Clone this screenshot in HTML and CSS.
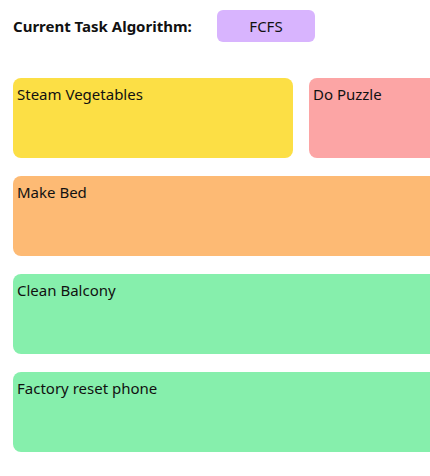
FILE: index.html
```html
<!DOCTYPE html>
<html>
<head>
<meta charset="utf-8">
<link rel="stylesheet" href="styles.css">
</head>
<body>
<div class="page">
  <div class="header">
    <span class="label">Current Task Algorithm:</span>
    <span class="pill">FCFS</span>
  </div>
  <div class="board">
    <div class="row">
      <div class="card yellow half">Steam Vegetables</div>
      <div class="card pink half">Do Puzzle</div>
    </div>
    <div class="card orange full">Make Bed</div>
    <div class="card green full">Clean Balcony</div>
    <div class="card green full">Factory reset phone</div>
  </div>
</div>
</body>
</html>
```
FILE: styles.css
```css
html, body {
  margin: 0;
  padding: 0;
  overflow: hidden;
  background: #fff;
}
body {
  font-family: "Noto Sans", "Open Sans", sans-serif;
  color: #111;
}
.page {
  padding: 10px 0 0 13px;
}
.header {
  display: flex;
  align-items: center;
  height: 32px;
}
.label {
  font-weight: 700;
  font-size: 15px;
  width: 204px;
}
.pill {
  width: 98px;
  height: 32px;
  box-sizing: border-box;
  background: #d8b4fe;
  border-radius: 6px;
  display: flex;
  align-items: center;
  justify-content: center;
  font-size: 15px;
}
.board {
  margin-top: 36px;
  display: flex;
  flex-direction: column;
  gap: 18px;
}
.row {
  display: flex;
  gap: 16px;
}
.card {
  height: 80px;
  box-sizing: border-box;
  border-radius: 8px;
  padding: 5px 4px;
  font-size: 15px;
  line-height: 22px;
  flex-shrink: 0;
}
.half { width: 280px; }
.full { width: 576px; }
.yellow { background: #fcdf45; }
.pink { background: #fca5a5; }
.orange { background: #fdba74; }
.green { background: #86efac; }
```
